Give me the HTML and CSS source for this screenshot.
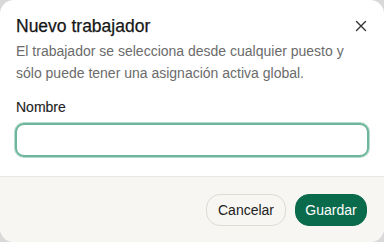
FILE: index.html
```html
<!DOCTYPE html>
<html lang="es">
<head>
<meta charset="utf-8">
<link rel="stylesheet" href="styles.css">
</head>
<body>
<div class="dialog">
  <div class="body">
    <div class="head">
      <h1 class="title">Nuevo trabajador</h1>
      <button class="close" aria-label="Cerrar">
        <svg width="12" height="12" viewBox="0 0 12 12"><path d="M1.5 1.5L10.5 10.5M10.5 1.5L1.5 10.5" stroke="#333" stroke-width="1.4" stroke-linecap="round"/></svg>
      </button>
    </div>
    <p class="desc">El trabajador se selecciona desde cualquier puesto y sólo puede tener una asignación activa global.</p>
    <label class="label">Nombre</label>
    <input class="input" type="text">
  </div>
  <div class="footer">
    <button class="btn btn-cancel">Cancelar</button>
    <button class="btn btn-save">Guardar</button>
  </div>
</div>
</body>
</html>
```
FILE: styles.css
```css
* { box-sizing: border-box; }
html, body { margin: 0; padding: 0; }
body {
  width: 384px;
  height: 242px;
  background: #d9d9d9;
  font-family: "Liberation Sans", Arial, sans-serif;
  overflow: hidden;
}
.dialog {
  width: 384px;
  height: 242px;
  background: #fff;
  border-radius: 14px;
  overflow: hidden;
  display: flex;
  flex-direction: column;
}
.body {
  padding: 14px 16px 0 16px;
  flex: 1;
  display: flex;
  flex-direction: column;
}
.head {
  display: flex;
  justify-content: space-between;
  align-items: center;
}
.title {
  margin: 0;
  font-size: 17.5px;
  font-weight: 400;
  color: #161616;
  line-height: 24px;
  -webkit-text-stroke: 0.25px #161616;
}
.close {
  border: 0;
  background: none;
  padding: 0;
  width: 12px;
  height: 12px;
  margin-right: 1px;
  display: flex;
}
.desc {
  margin: 2px 0 0 0;
  font-size: 14px;
  line-height: 22px;
  color: #6b6b6b;
}
.label {
  margin-top: 14px;
  font-size: 14px;
  font-weight: 400;
  color: #1e1e1e;
  line-height: 18px;
  -webkit-text-stroke: 0.15px #1e1e1e;
}
.input {
  margin-top: 7px;
  margin-left: -1px;
  width: 354px;
  height: 34px;
  border: 2px solid #6fb79c;
  border-radius: 9px;
  box-shadow: 0 0 0 1px #b6dccd;
  outline: none;
  background: #fff;
}
.footer {
  height: 66px;
  background: #f7f6f3;
  border-top: 1px solid #ebe9e4;
  display: flex;
  justify-content: flex-end;
  align-items: center;
  gap: 9px;
  padding: 0 17px 0 0;
}
.btn {
  font-family: "Liberation Sans", Arial, sans-serif;
  font-size: 14px;
  height: 32px;
  border-radius: 14px;
}
.btn-cancel {
  width: 80px;
  background: #f7f6f3;
  border: 1px solid #dedbd4;
  color: #222;
}
.btn-save {
  width: 72px;
  background: #0a6b4c;
  border: 1px solid #0a6b4c;
  color: #fff;
}
```
